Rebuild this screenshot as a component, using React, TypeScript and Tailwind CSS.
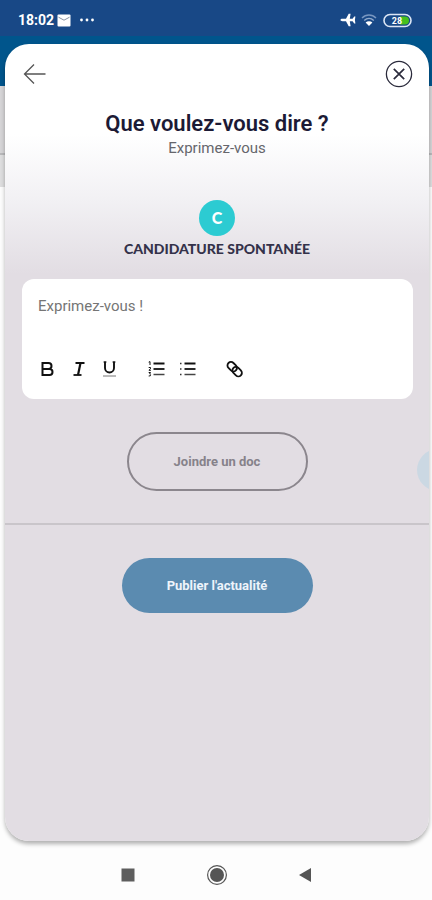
import { useState } from "react";

function StatusBar() {
  return (
    <header className="flex h-9 shrink-0 items-center justify-between bg-[#184886] pt-1 pr-5 pl-[18px] text-white">
      <div className="flex items-center">
        <span className="text-sm font-bold">18:02</span>
        <svg className="ml-[3px]" width="14" height="13" viewBox="0 0 14 13">
          <rect x="0.5" y="0.5" width="13" height="12" rx="1" fill="#fff" />
          <path d="M1.5 3.2 L7 6.2 L12.5 3.2" fill="none" stroke="#8a93a3" strokeWidth="1" />
        </svg>
        <svg className="ml-2" width="16" height="4" viewBox="0 0 16 4" fill="#fff">
          <circle cx="2.5" cy="2" r="1.4" />
          <circle cx="8" cy="2" r="1.4" />
          <circle cx="13.5" cy="2" r="1.4" />
        </svg>
      </div>
      <div className="flex items-center">
        <svg width="16" height="14" viewBox="0 0 16 14" fill="#fff">
          <path d="M0.5 7 C0.5 6.3 1.2 5.8 2.5 5.8 L6 5.8 L8.7 0.8 L10.6 0.8 L9.8 5.8 L12.6 5.8 L14.2 3.4 L15.4 3.4 L14.9 7 L15.4 10.6 L14.2 10.6 L12.6 8.2 L9.8 8.2 L10.6 13.2 L8.7 13.2 L6 8.2 L2.5 8.2 C1.2 8.2 0.5 7.7 0.5 7Z" />
        </svg>
        <svg className="ml-[5px]" width="16" height="14" viewBox="0 0 16 14" fill="none">
          <path d="M1 5 C5 1 11 1 15 5" stroke="#7796c0" strokeWidth="1.4" />
          <path d="M3.2 7.4 C6 4.8 10 4.8 12.8 7.4" stroke="#8fa9cc" strokeWidth="1.4" />
          <path d="M4.6 9.6 C6.5 7.9 9.5 7.9 11.4 9.6 L8 13Z" fill="#fff" />
        </svg>
        <svg className="ml-[6px]" width="29" height="15" viewBox="0 0 29 15">
          <rect x="1" y="1.5" width="27" height="12" rx="6" fill="none" stroke="#dbe6f5" strokeWidth="1.6" />
          <path d="M17 3.5 H22 A4 4 0 0 1 22 11.5 H17Z" fill="#45c01c" />
          <text x="14" y="11" textAnchor="middle" fontSize="9" fontWeight="700" fill="#fff" fontFamily="Roboto, sans-serif">
            28
          </text>
        </svg>
      </div>
    </header>
  );
}

const tools = [
  {
    label: "Gras",
    className: "",
    icon: <path d="M4 3 H10 A3 3 0 0 1 10 9 H4Z M4 9 H11 A3 3 0 0 1 11 15 H4Z" strokeWidth="2" />,
  },
  {
    label: "Italique",
    className: "ml-3",
    icon: (
      <>
        <path d="M6 3 H15" strokeWidth="2" />
        <path d="M11 3 L8.5 15" strokeWidth="2.2" />
        <path d="M4 15 H12" strokeWidth="1.8" />
      </>
    ),
  },
  {
    label: "Souligné",
    className: "ml-3",
    icon: (
      <>
        <path d="M4.5 1.5 V8 A4.5 4.5 0 0 0 13.5 8 V1.5" strokeWidth="1.9" />
        <path d="M3 2 H6 M12 2 H15" strokeWidth="1" />
        <path d="M2.5 16 H15.5" stroke="#777" strokeWidth="1" />
      </>
    ),
  },
  {
    label: "Liste numérotée",
    className: "ml-7",
    icon: (
      <>
        <path d="M6 3.5 H17" strokeWidth="2" />
        <path d="M6 9 H17" strokeWidth="1.8" />
        <path d="M6 14.5 H17" stroke="#444" strokeWidth="1.5" />
        <path d="M1.2 2.2 L2.5 1.6 V5 M1.2 7.5 H3 V8.8 L1.4 10.3 H3.4 M1.2 12.5 H3 L2.2 14 Q3.6 14.6 2.8 15.8 L1.2 16" strokeWidth="1" />
      </>
    ),
  },
  {
    label: "Liste à puces",
    className: "ml-3",
    icon: (
      <>
        <path d="M6 3.5 H17" strokeWidth="2" />
        <path d="M6 9 H17" strokeWidth="1.8" />
        <path d="M6 14.5 H17" stroke="#444" strokeWidth="1.5" />
        <path d="M1.5 3.5 H3 M1.5 9 H3 M1.5 14.5 H3" stroke="#333" strokeWidth="1.5" />
      </>
    ),
  },
  {
    label: "Lien",
    className: "ml-7",
    icon: (
      <g transform="rotate(45 9 9)">
        <rect x="0.5" y="5.5" width="10.5" height="7" rx="3.5" strokeWidth="1.8" />
        <rect x="7.5" y="5.5" width="10.5" height="7" rx="3.5" strokeWidth="1.8" />
      </g>
    ),
  },
];

function Editor() {
  const [text, setText] = useState("");

  return (
    <div className="mr-4 ml-[17px] mt-5 rounded-xl bg-white px-4 pt-4 pb-5">
      <textarea
        aria-label="Exprimez-vous !"
        placeholder="Exprimez-vous !"
        value={text}
        onChange={(e) => setText(e.target.value)}
        className="block h-16 w-full resize-none text-[15px] leading-[22px] outline-none placeholder:text-[#757575]"
      />
      <div className="flex h-5 items-center">
        {tools.map((tool) => (
          <button key={tool.label} type="button" aria-label={tool.label} className={tool.className}>
            <svg width="19" height="18" viewBox="0 0 18 18" fill="none" stroke="#111">
              {tool.icon}
            </svg>
          </button>
        ))}
      </div>
    </div>
  );
}

function NavBar() {
  return (
    <nav className="flex h-[59px] shrink-0 items-center justify-center gap-[67px] pt-2 pl-px">
      <button type="button" aria-label="Applications récentes">
        <svg width="22" height="22" viewBox="0 0 22 22">
          <rect x="4.5" y="4.5" width="13" height="13" fill="#5e5e5e" />
        </svg>
      </button>
      <button type="button" aria-label="Accueil">
        <svg width="22" height="22" viewBox="0 0 22 22">
          <circle cx="11" cy="11" r="9.4" fill="none" stroke="#555" strokeWidth="1.2" />
          <circle cx="11" cy="11" r="7" fill="#555" />
        </svg>
      </button>
      <button type="button" aria-label="Retour système">
        <svg width="22" height="22" viewBox="0 0 22 22">
          <path d="M4 11 L16 4 V18Z" fill="#555" />
        </svg>
      </button>
    </nav>
  );
}

export default function App() {
  return (
    <div className="flex min-h-screen flex-col bg-[linear-gradient(#00558c_86px,#d6d5d7_86px,#d6d5d7_153px,#b9b9bb_153px,#b9b9bb_155px,#dededf_155px,#dededf_187px,#fdfdfd_187px)] font-[Roboto,sans-serif]">
      <StatusBar />
      <main className="relative mt-2 mr-[3px] ml-[5px] flex-1 overflow-hidden rounded-3xl bg-[linear-gradient(#fff_90px,#f2f1f4_155px,#e2dde3_230px)] shadow-[0_3px_4px_rgba(0,0,0,0.3)]">
        <div className="flex items-center justify-between pt-4 pr-4 pl-[18px]">
          <button type="button" aria-label="Retour">
            <svg width="24" height="22" viewBox="0 0 24 22" fill="none" stroke="#555" strokeWidth="1.3">
              <path d="M22.5 11 H1.5 M11 1.5 L1.5 11 L11 20.5" />
            </svg>
          </button>
          <button type="button" aria-label="Fermer">
            <svg width="28" height="28" viewBox="0 0 28 28" fill="none" stroke="#2b2b3c">
              <circle cx="14" cy="14" r="12.6" strokeWidth="1.3" />
              <path d="M8.8 8.8 L19.2 19.2 M19.2 8.8 L8.8 19.2" strokeWidth="1.7" />
            </svg>
          </button>
        </div>

        <h1 className="mt-5 text-center text-[22px] leading-8 font-semibold text-[#1c1a35]">
          Que voulez-vous dire ?
        </h1>
        <p className="text-center text-[15px] leading-4 text-[#66666c]">Exprimez-vous</p>

        <div className="mt-11 flex flex-col items-center">
          <div className="flex h-9 w-9 items-center justify-center rounded-full bg-[#2ccbd2] font-[Lato,sans-serif] text-base font-black text-white">
            C
          </div>
          <p className="mt-[3px] font-[Lato,sans-serif] text-sm leading-5 font-black text-[#34324a]">
            CANDIDATURE SPONTANÉE
          </p>
        </div>

        <Editor />

        <div className="mt-[33px] flex justify-center border-b-2 border-[#c9c5ca] pb-8">
          <button
            type="button"
            className="h-[59px] w-[181px] rounded-full border-2 border-[#8b868d] text-[13px] font-bold text-[#86828a]"
          >
            Joindre un doc
          </button>
        </div>

        <div className="flex justify-center pt-[33px]">
          <button type="button" className="h-[55px] w-[191px] rounded-full bg-[#5b8bb0] text-[13px] font-bold text-[#eef4fb]">
            Publier l'actualité
          </button>
        </div>

        <div className="absolute top-[405px] -right-[30px] h-[42px] w-[42px] rounded-full bg-[#cbd8e3]" />
      </main>
      <NavBar />
    </div>
  );
}
